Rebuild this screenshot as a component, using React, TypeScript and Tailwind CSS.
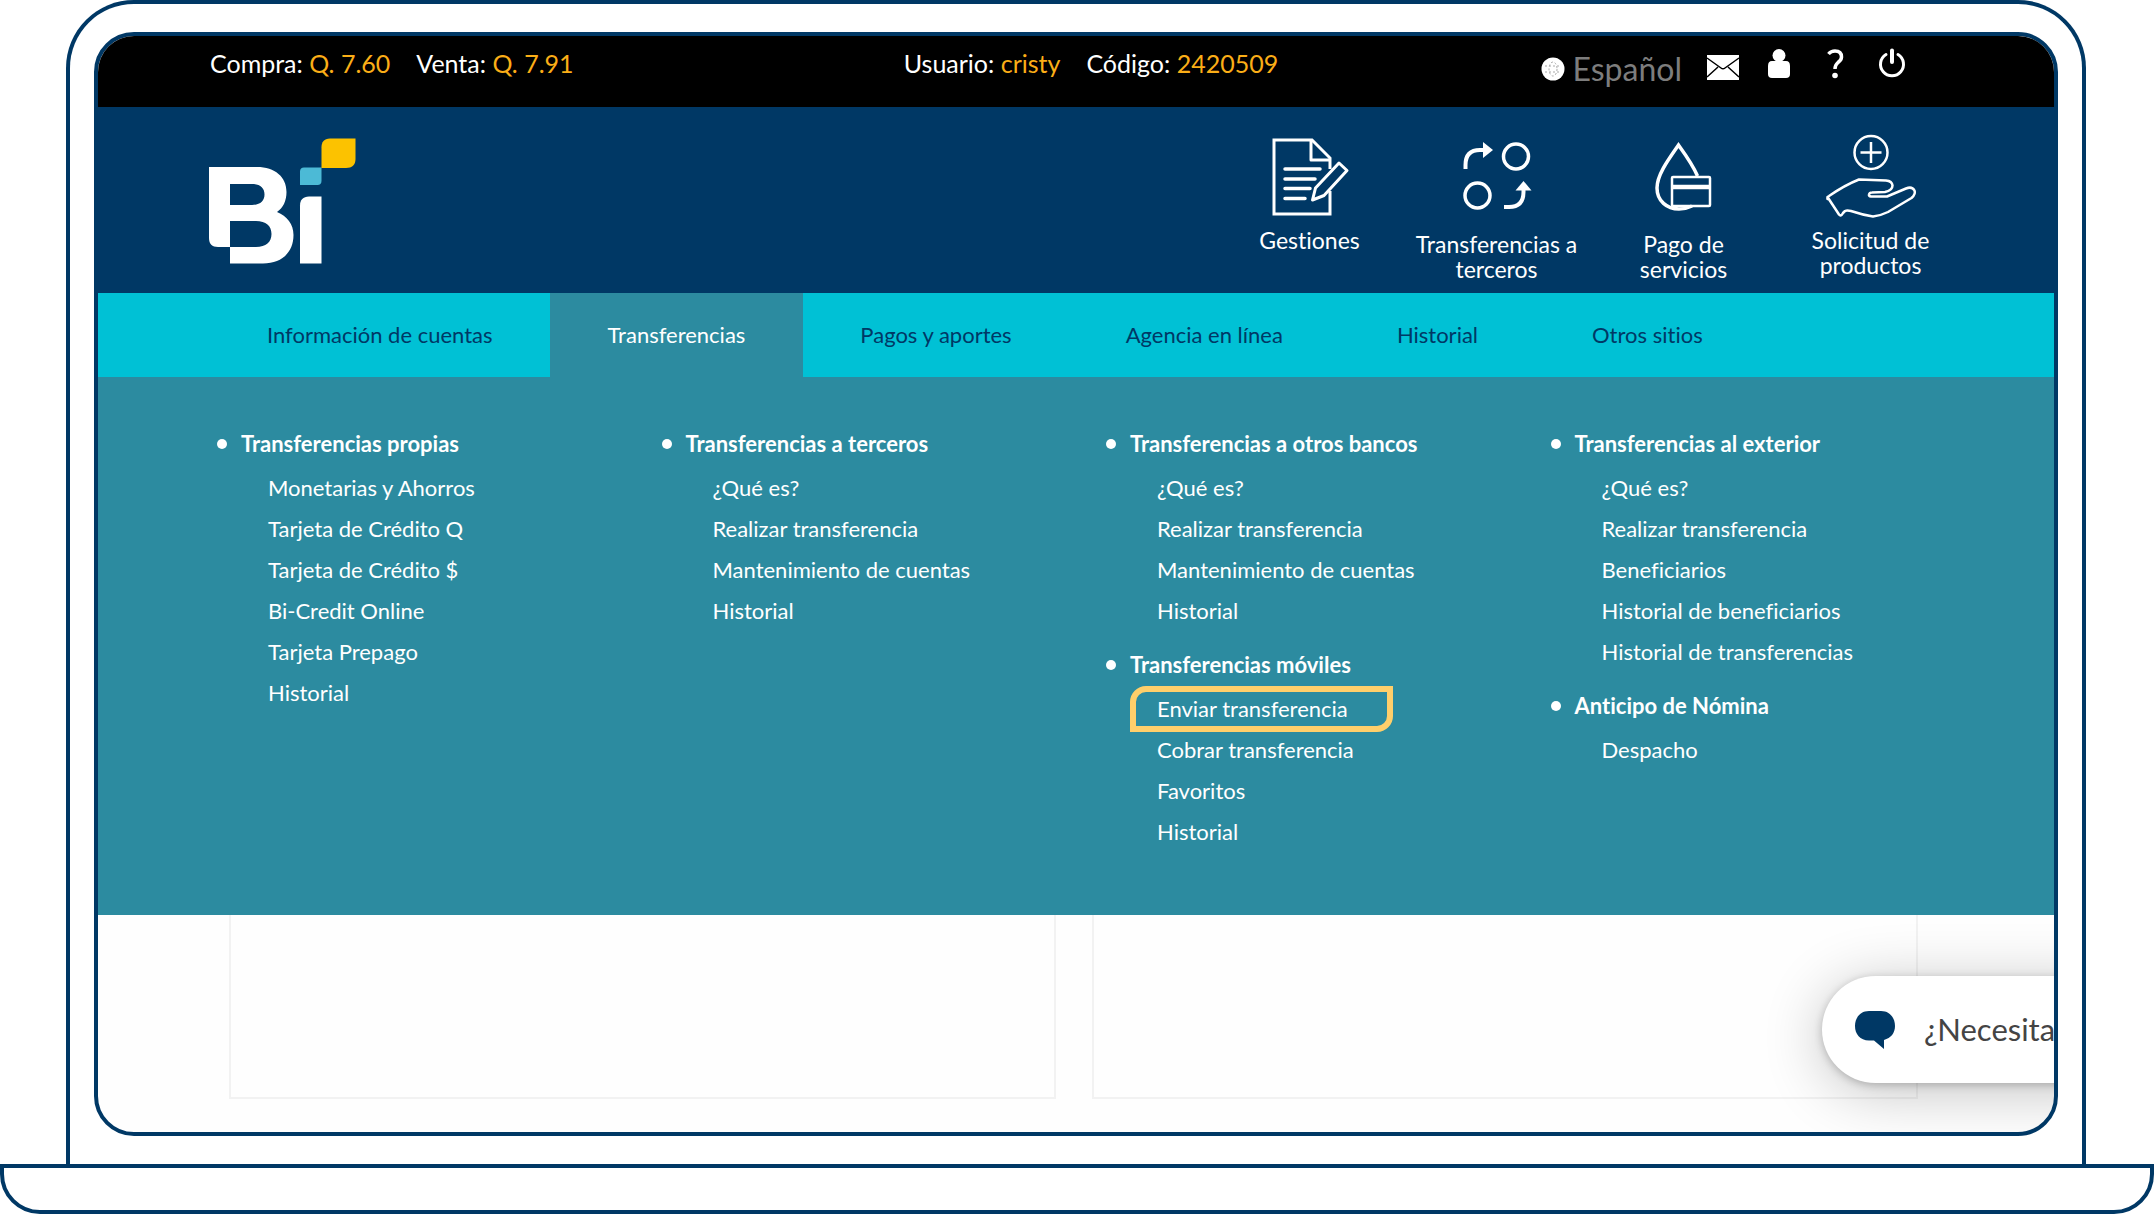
import React from "react";

type MenuGroup = { title: string; items: string[] };

const HIGHLIGHTED = "Enviar transferencia";

const tabs = [
  "Información de cuentas",
  "Transferencias",
  "Pagos y aportes",
  "Agencia en línea",
  "Historial",
  "Otros sitios",
];

const menuColumns: MenuGroup[][] = [
  [
    {
      title: "Transferencias propias",
      items: [
        "Monetarias y Ahorros",
        "Tarjeta de Crédito Q",
        "Tarjeta de Crédito $",
        "Bi-Credit Online",
        "Tarjeta Prepago",
        "Historial",
      ],
    },
  ],
  [
    {
      title: "Transferencias a terceros",
      items: ["¿Qué es?", "Realizar transferencia", "Mantenimiento de cuentas", "Historial"],
    },
  ],
  [
    {
      title: "Transferencias a otros bancos",
      items: ["¿Qué es?", "Realizar transferencia", "Mantenimiento de cuentas", "Historial"],
    },
    {
      title: "Transferencias móviles",
      items: [HIGHLIGHTED, "Cobrar transferencia", "Favoritos", "Historial"],
    },
  ],
  [
    {
      title: "Transferencias al exterior",
      items: [
        "¿Qué es?",
        "Realizar transferencia",
        "Beneficiarios",
        "Historial de beneficiarios",
        "Historial de transferencias",
      ],
    },
    { title: "Anticipo de Nómina", items: ["Despacho"] },
  ],
];

function BiLogo() {
  return (
    <svg viewBox="0 0 147 126" className="h-[126px] w-[147px]" role="img" aria-label="Bi">
      <path
        fill="#fff"
        fillRule="evenodd"
        d="M0 29H48C66 29 77.500 39 77.500 54C77.500 63 74 70 68 74C78 78 84.500 86 84.500 97C84.500 114 73 125.500 54 125.500H21V109H9C3 109 0 106 0 100ZM21 46V67H43C51 67 55.500 63 55.500 56.500C55.500 50 51 46 43 46ZM21 83V109H47C57 109 62.500 104 62.500 96C62.500 88 57 83 47 83Z"
      />
      <path fill="#fff" d="M100 58.500H112.500V125.500H91V67.500C91 62 94 58.500 100 58.500Z" />
      <path fill="#4cbad6" d="M95 29.500H112.500V43C112.500 45.500 111 47 108.500 47H91V33.500C91 31 92.500 29.500 95 29.500Z" />
      <path fill="#fcc200" d="M121 0.500H146.500V21C146.500 27 143 30 137 30H112.500V9.500C112.500 4 115 0.500 121 0.500Z" />
    </svg>
  );
}

function DocumentIcon() {
  return (
    <svg viewBox="0 0 90 90" className="h-[90px] w-[90px]" fill="none" stroke="#fff" strokeWidth="3" aria-hidden="true">
      <path d="M65 42V31L47 13H9V87H65V64" />
      <path d="M65 33H46V13" strokeLinejoin="round" />
      <path d="M20 42H55M20 52H50M20 61.500H45M20 71.500H40" strokeWidth="3.500" strokeLinecap="round" />
      <path d="M74 36L82 43.500L59 68.500L47.500 73L50.500 61Z" strokeLinejoin="round" />
    </svg>
  );
}

function TransferIcon() {
  return (
    <svg viewBox="0 0 90 90" className="h-[90px] w-[90px]" fill="none" stroke="#fff" strokeWidth="3.500" aria-hidden="true">
      <circle cx="64" cy="29.500" r="12.500" />
      <circle cx="25.500" cy="68.500" r="12.500" />
      <path d="M13.500 42V38Q13.500 23 28 23H34" strokeWidth="4" />
      <path d="M31 15L41 23L31 31Z" fill="#fff" stroke="none" />
      <path d="M52 80H57Q71.500 80 71.500 65V60" strokeWidth="4" />
      <path d="M63.500 63.500L71.500 54L79.500 63.500Z" fill="#fff" stroke="none" />
    </svg>
  );
}

function ServicesIcon() {
  return (
    <svg viewBox="0 0 90 90" className="h-[90px] w-[90px]" fill="none" stroke="#fff" strokeWidth="3" aria-hidden="true">
      <path
        d="M58.500 49C54 38 46 27 39.500 18C29 33 18 48 18 61C18 74 28 82 40 82C45 82 49 81 53 79"
        strokeWidth="3.500"
      />
      <rect x="33" y="50" width="38" height="29" rx="1" strokeWidth="2.500" />
      <path d="M33 60H71" strokeWidth="4.500" />
    </svg>
  );
}

function HandPlusIcon() {
  return (
    <svg viewBox="0 0 96 100" className="h-[100px] w-[96px]" fill="none" stroke="#fff" strokeWidth="2.500" strokeLinejoin="round" aria-hidden="true">
      <circle cx="48" cy="25.500" r="16.500" />
      <path d="M48 15V36M37.500 25.500H58.500" />
      <path d="M4.500 70L16 87.500Q18 90 20 86L22 84Q24 83 28 84Q40 88 50 89.500Q58 88.500 65 85L88.500 71Q93 67 91.500 63.500Q89 59 83 61.500L64 69.500H48Q45.500 69 46 67.500Q46.500 65.500 49 65.500L62 65Q69.500 63.500 69.500 58.500Q69 54 63 53.500L36 52.500Q22 58 6 69Q4 70 4.500 72Z" />
    </svg>
  );
}

function GlobeIcon() {
  return (
    <svg viewBox="0 0 24 24" className="h-6 w-6" aria-hidden="true">
      <circle cx="12" cy="12" r="11.500" fill="#fff" />
      <g fill="none" stroke="#a9a9a9" strokeWidth="1" strokeDasharray="2 2">
        <ellipse cx="12" cy="12" rx="4" ry="7" />
        <path d="M4 9H20M4 15H20" />
      </g>
    </svg>
  );
}

function MailIcon() {
  return (
    <svg viewBox="0 0 34 26" className="h-[26px] w-[34px]" aria-hidden="true">
      <rect x="1" y="0" width="32" height="25" fill="#fff" />
      <path d="M1 3L15 13Q17 14.500 19 13L33 3M1 22L12 12M33 22L22 12" fill="none" stroke="#000" strokeWidth="1.500" />
    </svg>
  );
}

function UserIcon() {
  return (
    <svg viewBox="0 0 24 30" className="h-[30px] w-6" fill="#fff" aria-hidden="true">
      <circle cx="12" cy="6.500" r="6.500" />
      <path d="M5 12H19Q23 12 23 17V25Q23 29 19 29H5Q1 29 1 25V17Q1 12 5 12Z" />
    </svg>
  );
}

function HelpIcon() {
  return (
    <svg viewBox="0 0 18 30" className="h-[30px] w-[18px]" fill="none" stroke="#fff" strokeWidth="3.500" aria-hidden="true">
      <path d="M1.500 5Q4 2 8 2Q14.500 2 14.500 8Q14.500 11 11 13.500Q8 16 8 20" />
      <circle cx="8" cy="26.500" r="2.800" fill="#fff" stroke="none" />
    </svg>
  );
}

function PowerIcon() {
  return (
    <svg viewBox="0 0 28 30" className="h-[30px] w-7" fill="none" stroke="#fff" strokeWidth="3" strokeLinecap="round" aria-hidden="true">
      <path d="M8 6.500A11.500 11.500 0 1 0 20 6.500" />
      <path d="M14 2.500V14" strokeWidth="4" />
    </svg>
  );
}

function ChatIcon() {
  return (
    <svg viewBox="0 0 42 40" className="h-10 w-[42px] shrink-0" fill="#003865" aria-hidden="true">
      <path d="M15 1H27C36 1 41 8 41 16C41 23 37 28 30 30V39L20 30.500H15C6 30.500 1 24 1 16C1 8 6 1 15 1Z" />
    </svg>
  );
}

function Datum({ label, value }: { label: string; value: string }) {
  return (
    <p>
      {label} <span className="text-[#fbae17]">{value}</span>
    </p>
  );
}

function TopBar() {
  return (
    <div className="grid h-[71px] grid-cols-[1fr_auto_1fr] items-start bg-black pr-[148px] pl-[112px] text-[25px] leading-7 text-white">
      <div className="flex gap-[26px] pt-[13px]">
        <Datum label="Compra:" value="Q. 7.60" />
        <Datum label="Venta:" value="Q. 7.91" />
      </div>
      <div className="flex gap-[26px] pt-[13px] pl-[66px]">
        <Datum label="Usuario:" value="cristy" />
        <Datum label="Código:" value="2420509" />
      </div>
      <div className="flex items-start justify-end pt-2.5">
        <button type="button" className="mr-6 flex items-center gap-2 pt-[5px] text-[32px] leading-9 text-[#7d7d7d]">
          <GlobeIcon />
          Español
        </button>
        <button type="button" aria-label="Mensajes" className="mr-[27px] pt-[9px]">
          <MailIcon />
        </button>
        <button type="button" aria-label="Perfil" className="mr-9 pt-[3px]">
          <UserIcon />
        </button>
        <button type="button" aria-label="Ayuda" className="mr-[33px] pt-[3px]">
          <HelpIcon />
        </button>
        <button type="button" aria-label="Salir" className="pt-0.5">
          <PowerIcon />
        </button>
      </div>
    </div>
  );
}

function Shortcut({ icon, lines, low }: { icon: React.ReactNode; lines: string[]; low?: boolean }) {
  return (
    <a href="#" className="flex w-[187px] flex-col items-center text-center">
      <span className={low ? "h-[105px]" : "h-[101px]"}>{icon}</span>
      {lines.map((line) => (
        <span key={line}>{line}</span>
      ))}
    </a>
  );
}

function Header() {
  return (
    <header className="flex h-[186px] items-start justify-between bg-[#003865] pr-[90px] pl-[111px] text-[23px] leading-[25px] text-white">
      <a href="#" className="pt-[31px]">
        <BiLogo />
      </a>
      <div className="flex pt-5">
        <Shortcut icon={<DocumentIcon />} lines={["Gestiones"]} />
        <Shortcut low icon={<TransferIcon />} lines={["Transferencias a", "terceros"]} />
        <Shortcut low icon={<ServicesIcon />} lines={["Pago de", "servicios"]} />
        <Shortcut icon={<HandPlusIcon />} lines={["Solicitud de", "productos"]} />
      </div>
    </header>
  );
}

function MegaMenu() {
  return (
    <div className="grid grid-cols-4 bg-[#2c8ba0] pt-[43px] pr-[66px] pb-[63px] pl-[112px] text-[22px] text-white">
      {menuColumns.map((groups) => (
        <div key={groups[0].title} className="flex flex-col gap-2.5">
          {groups.map((group) => (
            <section key={group.title}>
              <h2 className="flex items-center gap-3.5 pl-[7px] leading-[47px] font-bold">
                <span className="size-2.5 rounded-full bg-white" />
                {group.title}
              </h2>
              <ul className="pl-[58px] leading-[41px]">
                {group.items.map((item) => (
                  <li key={item} className="relative">
                    {item === HIGHLIGHTED && (
                      <span className="absolute -top-0.5 -left-[27px] h-[46px] w-[263px] rounded-tl-2xl rounded-br-2xl border-6 border-[#ffcf6b]" />
                    )}
                    <a href="#">{item}</a>
                  </li>
                ))}
              </ul>
            </section>
          ))}
        </div>
      ))}
    </div>
  );
}

export default function App() {
  return (
    <div className="bg-white font-['Lato',sans-serif] [font-variant-ligatures:none]">
      <div className="mr-[68px] ml-[66px] rounded-t-[68px] border-4 border-b-0 border-[#003865] px-6 py-7">
        <main className="relative overflow-hidden rounded-[40px] border-4 border-[#003865] bg-[#fefefe]">
          <TopBar />
          <Header />
          <nav className="flex bg-[#00c1d5] pl-[112px] text-[22px] leading-[84px] text-[#003865]">
            {tabs.map((tab) => (
              <a
                key={tab}
                href="#"
                className={tab === "Transferencias" ? "bg-[#2c8ba0] px-[58px] text-white" : "px-[57px]"}
              >
                {tab}
              </a>
            ))}
          </nav>
          <MegaMenu />
          <div className="grid grid-cols-2 gap-9 pr-[136px] pb-[33px] pl-[131px]">
            <div className="h-[184px] border-2 border-t-0 border-[#f2f2f2]" />
            <div className="h-[184px] border-2 border-t-0 border-[#f2f2f2]" />
          </div>
          <button
            type="button"
            className="absolute -right-24 bottom-[49px] flex h-[107px] w-[328px] items-center gap-7 rounded-full bg-white pl-8 text-[31px] whitespace-nowrap text-[#444444] shadow-[0_8px_60px_rgba(0,0,0,0.24),0_2px_8px_rgba(0,0,0,0.22)]"
          >
            <ChatIcon />
            ¿Necesita
          </button>
        </main>
      </div>
      <div className="h-[50px] rounded-b-[40px] border-4 border-[#003865]" />
    </div>
  );
}
